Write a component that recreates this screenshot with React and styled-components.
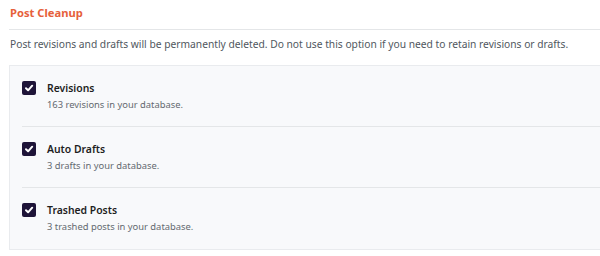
import React from "react";
import styled, { createGlobalStyle } from "styled-components";

const Global = createGlobalStyle`
  html, body { margin: 0; padding: 0; background: #fff; overflow: hidden; }
  body { font-family: "Noto Sans", "Open Sans", sans-serif; }
`;

const Page = styled.div`
  padding: 0 0 0 9px;
`;

const Title = styled.h2`
  margin: 0;
  padding: 5px 0 8px 1px;
  font-size: 11.2px;
  line-height: 16px;
  font-weight: 700;
  color: #e6603b;
  border-bottom: 1px solid #e4e6e8;
`;

const Desc = styled.p`
  margin: 0;
  padding: 7px 0 14px 1px;
  font-size: 10.25px;
  line-height: 14px;
  white-space: nowrap;
  color: #50575e;
`;

const Panel = styled.div`
  background: #f8f9fb;
  border: 1px solid #e9ebee;
  border-right: none;
  padding: 0 0 0 12px;
`;

const Row = styled.label`
  display: flex;
  align-items: flex-start;
  gap: 11px;
  height: 61px;
  box-sizing: border-box;
  padding-top: 15px;
  border-bottom: ${(p) => (p.$last ? "none" : "1px solid #e4e6e8")};
`;

const Box = styled.span`
  flex: none;
  width: 14px;
  height: 14px;
  border-radius: 2px;
  background: #1e1438;
  display: flex;
  align-items: center;
  justify-content: center;
`;

const Text = styled.div`
  display: flex;
  flex-direction: column;
`;

const Label = styled.span`
  font-size: 10.4px;
  line-height: 14px;
  font-weight: 600;
  color: #1e1e1e;
`;

const Sub = styled.span`
  margin-top: 3px;
  font-size: 9.4px;
  line-height: 13px;
  color: #646970;
`;

const Check = () => (
  <svg width="10" height="10" viewBox="0 0 10 10">
    <path d="M2 5.3 L4.1 7.3 L8.2 2.7" fill="none" stroke="#fff" strokeWidth="2" strokeLinecap="round" strokeLinejoin="round" />
  </svg>
);

const items = [
  { label: "Revisions", sub: "163 revisions in your database." },
  { label: "Auto Drafts", sub: "3 drafts in your database." },
  { label: "Trashed Posts", sub: "3 trashed posts in your database." },
];

export default function App() {
  return (
    <Page>
      <Global />
      <Title>Post Cleanup</Title>
      <Desc>
        Post revisions and drafts will be permanently deleted. Do not use this option if you need to retain revisions or drafts.
      </Desc>
      <Panel>
        {items.map((it, i) => (
          <Row key={it.label} $last={i === items.length - 1}>
            <Box><Check /></Box>
            <Text>
              <Label>{it.label}</Label>
              <Sub>{it.sub}</Sub>
            </Text>
          </Row>
        ))}
      </Panel>
    </Page>
  );
}
